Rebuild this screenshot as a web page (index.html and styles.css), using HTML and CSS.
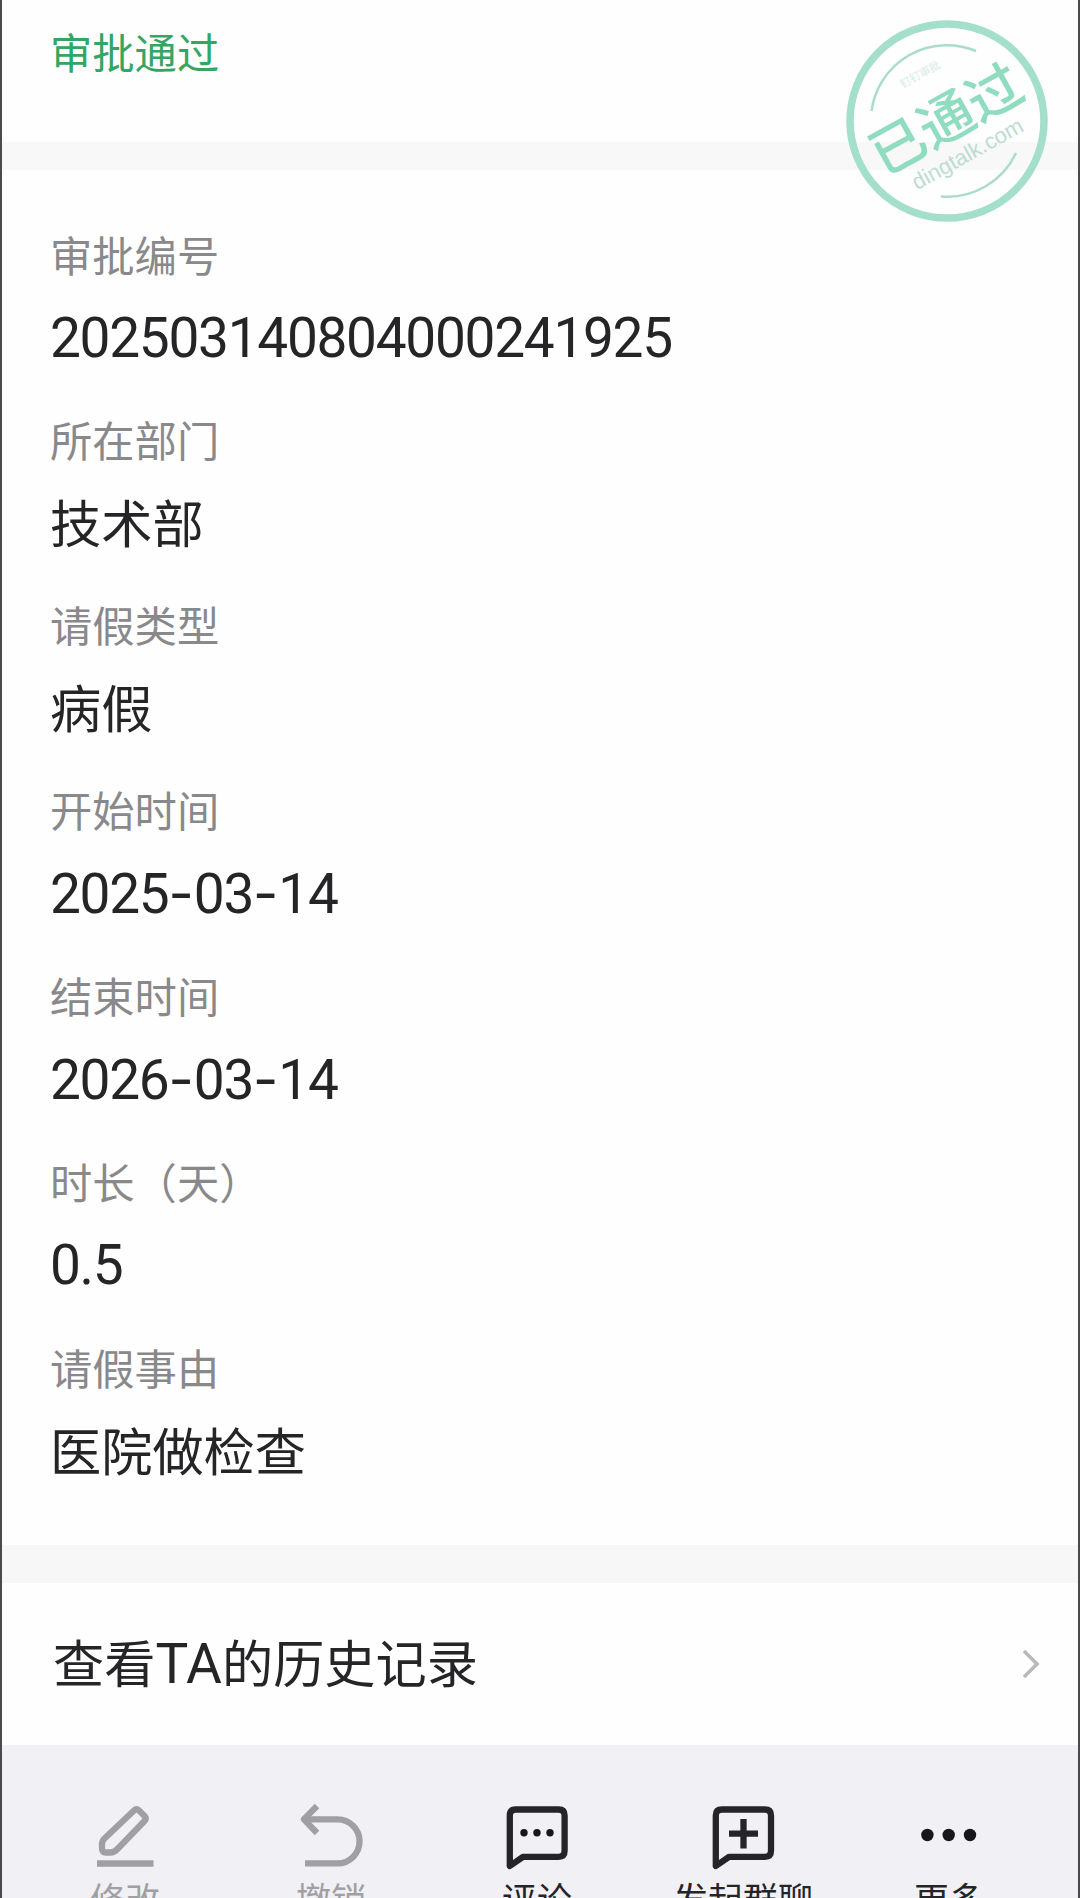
FILE: index.html
```html
<!DOCTYPE html>
<html lang="zh-CN">

<head>
  <meta charset="UTF-8">
  <title>审批详情</title>
  <link rel="stylesheet" href="styles.css">
</head>

<body>
  <div class="page">
    <header class="status">
      <span class="status-text">审批通过</span>
      <svg class="stamp" viewBox="0 0 204 204">
        <circle class="ring" cx="102" cy="102" r="97" />
        <path class="arc" d="M26.5 92 A76 76 0 0 1 131 32" />
        <path class="arc" d="M96 177.5 A76 76 0 0 0 171 134" />
        <g transform="rotate(-29 102 102)">
          <text class="stamp-small" x="101" y="52">钉钉审批</text>
          <text class="stamp-main" x="102" y="120">已通过</text>
          <text class="stamp-site" x="104" y="148">dingtalk.com</text>
        </g>
      </svg>
    </header>

    <main class="fields">
      <div class="field">
        <div class="label">审批编号</div>
        <div class="value num">202503140804000241925</div>
      </div>
      <div class="field">
        <div class="label">所在部门</div>
        <div class="value">技术部</div>
      </div>
      <div class="field">
        <div class="label">请假类型</div>
        <div class="value">病假</div>
      </div>
      <div class="field">
        <div class="label">开始时间</div>
        <div class="value num">2025<span class="dash">-</span>03<span class="dash">-</span>14</div>
      </div>
      <div class="field">
        <div class="label">结束时间</div>
        <div class="value num">2026<span class="dash">-</span>03<span class="dash">-</span>14</div>
      </div>
      <div class="field">
        <div class="label">时长（天）</div>
        <div class="value num">0.5</div>
      </div>
      <div class="field">
        <div class="label">请假事由</div>
        <div class="value">医院做检查</div>
      </div>
    </main>

    <div class="history">
      <span class="history-text">查看<span class="latin">TA</span>的历史记录</span>
      <svg class="arrow" viewBox="0 0 20 32">
        <path d="M3 3 L16 16 L3 29" />
      </svg>
    </div>

    <nav class="toolbar">
      <div class="tool disabled">
        <svg class="icon" viewBox="0 0 72 72">
          <path d="M45 13.5 Q47.5 11 50 13.5 L55.5 19 Q58 21.5 55.5 24 L28 52.5 Q25 55.5 21 55.5 H17 Q13 55.5 13 51 V47 Q13 44 15.5 41.5 Z" />
          <path d="M8 66.5 H64.5" />
        </svg>
        <span>修改</span>
      </div>
      <div class="tool disabled">
        <svg class="icon" viewBox="0 0 72 72">
          <path d="M22 9 L9 22.3 L22 36" />
          <path d="M9 22.3 H42.5 A22 22 0 0 1 42.5 66.4 H10" />
        </svg>
        <span>撤销</span>
      </div>
      <div class="tool">
        <svg class="icon" viewBox="0 0 72 72">
          <path d="M8.8 69 V18.5 Q8.8 12.5 14.8 12.5 H57.6 Q63.6 12.5 63.6 18.5 V53.8 Q63.6 59.8 57.6 59.8 H22 Z" />
          <g class="dots">
            <circle cx="23" cy="35.7" r="3.7" />
            <circle cx="36" cy="35.7" r="3.7" />
            <circle cx="49" cy="35.7" r="3.7" />
          </g>
        </svg>
        <span>评论</span>
      </div>
      <div class="tool">
        <svg class="icon" viewBox="0 0 72 72">
          <path d="M8.8 69 V18.5 Q8.8 12.5 14.8 12.5 H58 Q64 12.5 64 18.5 V53.8 Q64 59.8 58 59.8 H22 Z" />
          <path d="M22 36.7 H51 M36.5 22 V51.5" />
        </svg>
        <span>发起群聊</span>
      </div>
      <div class="tool">
        <svg class="icon" viewBox="0 0 72 72">
          <g class="dots">
            <circle cx="14.4" cy="38" r="6.2" />
            <circle cx="35.7" cy="38" r="6.2" />
            <circle cx="57" cy="38" r="6.2" />
          </g>
        </svg>
        <span>更多</span>
      </div>
    </nav>
  </div>
</body>

</html>
```

FILE: styles.css
```css
* {
  box-sizing: border-box;
}

body {
  margin: 0;
  font-family: "Noto Sans CJK SC", sans-serif;
  color: #252527;
  background-color: #fefefe;
}

.page {
  height: 1898px;
  overflow: hidden;
  display: flex;
  flex-direction: column;
  border-left: 2px solid #4a4a4d;
  border-right: 2px solid #4a4a4d;
}

.status {
  position: relative;
  flex: none;
  height: 170px;
  padding: 21px 48px 0;
  border-bottom: 28px solid #f8f8f8;
}

.status-text {
  display: block;
  font-size: 42.3px;
  line-height: 60px;
  color: #35a563;
}

.stamp {
  position: absolute;
  top: 19px;
  right: 29px;
  width: 204px;
  height: 204px;
}

.stamp text {
  text-anchor: middle;
}

.ring {
  fill: none;
  stroke: #a3dfcb;
  stroke-width: 7.5;
}

.arc {
  fill: none;
  stroke: #aadccc;
  stroke-width: 2.5;
}

.stamp-main {
  font-size: 55px;
  font-weight: 500;
  fill: #8fdcc0;
}

.stamp-small {
  font-size: 11px;
  fill: #d8ebe4;
}

.stamp-site {
  font-family: "Liberation Sans", sans-serif;
  font-size: 22px;
  fill: #bddcd2;
}

.fields {
  flex: none;
  height: 1375px;
  padding: 54px 48px 0;
}

.field {
  margin-bottom: 34.1px;
}

.label {
  font-size: 42.3px;
  line-height: 60px;
  margin-bottom: 14px;
  color: #89898b;
}

.value {
  font-size: 51.2px;
  line-height: 77px;
}

.num {
  padding-top: 3px;
  font-family: Roboto, sans-serif;
  font-size: 55px;
  line-height: 74px;
  letter-spacing: -1.3px;
}

.dash {
  font-family: Inter, sans-serif;
  letter-spacing: 0;
}

.history {
  flex: none;
  height: 200px;
  padding: 0 37px 0 51px;
  border-top: 38px solid #f7f7f7;
  display: flex;
  align-items: center;
  justify-content: space-between;
  font-size: 51.2px;
}

.history-text {
  padding-bottom: 6px;
}

.latin {
  font-family: Roboto, sans-serif;
  font-size: 55px;
}

.arrow {
  width: 20px;
  height: 32px;
  fill: none;
  stroke: #b9b9bb;
  stroke-width: 3.5;
}

.toolbar {
  flex: none;
  height: 153px;
  padding: 52px 26px 0 20px;
  display: flex;
  background-color: #f1f1f5;
}

.tool {
  flex: 1 1 0;
  display: flex;
  flex-direction: column;
  align-items: center;
  font-size: 35px;
  line-height: 50px;
  white-space: nowrap;
}

.icon {
  width: 72px;
  height: 72px;
  margin-bottom: 4px;
  overflow: visible;
  fill: none;
  stroke: #252529;
  stroke-width: 6.3;
  stroke-linejoin: round;
}

.disabled {
  color: #a0a0a4;
}

.disabled .icon {
  stroke: #a0a0a4;
}

.dots {
  fill: #17171b;
  stroke: none;
}
```
